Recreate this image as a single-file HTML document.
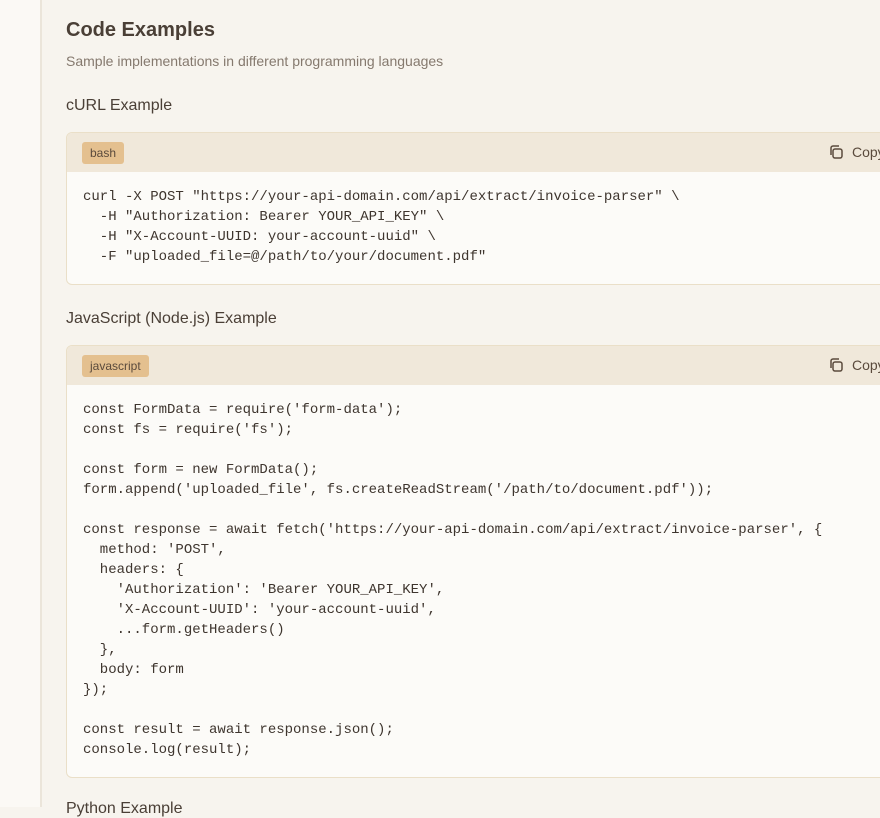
<!DOCTYPE html>
<html><head><style>
body{margin:0;width:880px;height:807px;overflow:hidden;background:#f7f4ee;font-family:"Liberation Sans",sans-serif;color:#4a3f36;position:relative}
.side{position:absolute;left:0;top:0;width:40px;height:807px;background:#fbf9f5;border-right:2px solid #ebe5da}
.main{position:absolute;left:66px;top:0;width:900px}
h1{position:absolute;top:19px;margin:0;font-size:20px;font-weight:600;color:#4a3f36}
.sub{position:absolute;top:53px;font-size:14px;color:#85796e}
h3{position:absolute;margin:0;font-size:16px;font-weight:normal;color:#4a3f36}
.blk{position:absolute;left:0;width:880px;border:1px solid #eadfc8;border-radius:6px;background:#fcfbf8;overflow:hidden}
.hd{height:39px;background:#f0e8da;position:relative}
.tag{position:absolute;left:15px;top:9px;height:22px;line-height:22px;padding:0 8px;background:#e4c08f;border-radius:3px;font-size:12px;color:#5a4a3c}
.cp{position:absolute;left:761px;top:11px;font-size:14px;color:#5a4a3c}
.cp svg{vertical-align:-3px;margin-right:8px}
pre{margin:0;padding:15px 16px 0;font-family:"Liberation Mono",monospace;font-size:14px;line-height:20px;color:#3e352e}
</style></head><body>
<div class="side"></div>
<div class="main">
<h1>Code Examples</h1>
<div class="sub">Sample implementations in different programming languages</div>
<h3 style="top:97px">cURL Example</h3>
<div class="blk" style="top:132px;height:151px">
<div class="hd"><span class="tag">bash</span><span class="cp"><svg width="16" height="16" viewBox="0 0 16 16" fill="none" stroke="#5a4a3c" stroke-width="1.5"><rect x="5" y="5" width="9" height="9" rx="2"/><path d="M3 11V4a2 2 0 0 1 2-2h6"/></svg>Copy</span></div>
<pre>curl -X POST "https://your-api-domain.com/api/extract/invoice-parser" \
  -H "Authorization: Bearer YOUR_API_KEY" \
  -H "X-Account-UUID: your-account-uuid" \
  -F "uploaded_file=@/path/to/your/document.pdf"</pre>
</div>
<h3 style="top:310px">JavaScript (Node.js) Example</h3>
<div class="blk" style="top:345px;height:431px">
<div class="hd"><span class="tag">javascript</span><span class="cp"><svg width="16" height="16" viewBox="0 0 16 16" fill="none" stroke="#5a4a3c" stroke-width="1.5"><rect x="5" y="5" width="9" height="9" rx="2"/><path d="M3 11V4a2 2 0 0 1 2-2h6"/></svg>Copy</span></div>
<pre>const FormData = require('form-data');
const fs = require('fs');

const form = new FormData();
form.append('uploaded_file', fs.createReadStream('/path/to/document.pdf'));

const response = await fetch('https://your-api-domain.com/api/extract/invoice-parser', {
  method: 'POST',
  headers: {
    'Authorization': 'Bearer YOUR_API_KEY',
    'X-Account-UUID': 'your-account-uuid',
    ...form.getHeaders()
  },
  body: form
});

const result = await response.json();
console.log(result);</pre>
</div>
<h3 style="top:800px">Python Example</h3>
</div>
</body></html>
